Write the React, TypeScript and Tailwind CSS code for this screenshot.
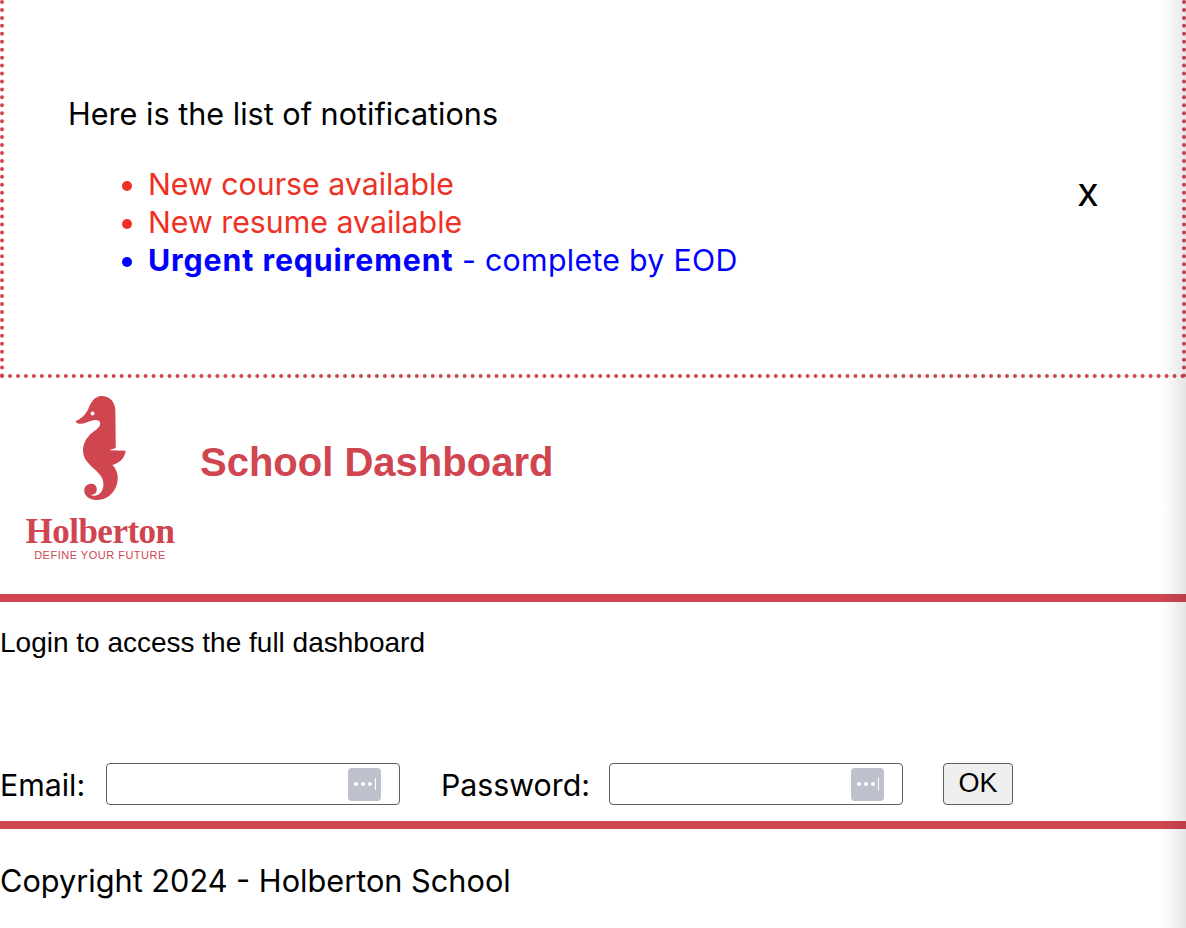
const sfFont = "font-['Inter','Liberation_Sans',sans-serif]";

function Seahorse() {
  return (
    <svg viewBox="220 40 160 330" className="h-[110px] w-[53px] shrink-0">
      <path
        fill="#cf4550"
        d="M298 48 C325 46 344 62 345 92 L346 205 L326 212 L376 213 C374 232 362 248 336 256 C352 272 357 295 347 322 C335 350 310 364 284 362 C262 360 250 346 251 332 C252 318 264 311 276 313 C287 316 292 327 287 338 C283 346 274 348 268 345 C278 352 292 350 300 340 C312 326 312 306 300 288 C286 268 258 254 250 229 C243 205 250 184 268 165 C281 152 300 144 299 130 C298 122 290 119 278 121 C262 124 250 133 237 132 C230 131 226 128 225 124 C240 118 252 108 261 92 C268 76 275 54 298 48 Z"
      />
      <circle cx="276" cy="101" r="6" fill="#ffffff" />
    </svg>
  );
}

function KeyBadge() {
  return (
    <span className="flex h-[33px] w-[33px] items-center justify-center gap-[3px] rounded-[4px] bg-[#bcc1cc]">
      <span className="h-[4px] w-[4px] rounded-full bg-white" />
      <span className="h-[4px] w-[4px] rounded-full bg-white" />
      <span className="h-[4px] w-[4px] rounded-full bg-white" />
      <span className="h-[12px] w-[1px] bg-white" />
    </span>
  );
}

function Field({ label, className }: { label: string; className: string }) {
  return (
    <>
      <label className={`whitespace-nowrap pt-[2px] text-[30.3px] leading-none text-black ${className}`}>{label}</label>
      <div className="ml-[20px] flex h-[42px] w-[294px] items-center justify-end rounded-[4px] border border-[#5f5f5f] bg-white pr-[18px]">
        <KeyBadge />
      </div>
    </>
  );
}

export default function App() {
  return (
    <div className={`relative h-[928px] w-[1186px] overflow-hidden bg-white ${sfFont}`}>
      {/* Notifications */}
      <div className="relative h-[378px] border-x-[4px] border-b-[4px] border-dotted border-[#cf4550] pl-[64px] pt-[95px]">
        <p className="text-[30.6px] leading-[38px] text-black">Here is the list of notifications</p>
        <ul className="mt-[32px] list-disc pl-[80px] text-[30.3px] leading-[38px]">
          <li className="text-[#ee3124]">New course available</li>
          <li className="text-[#ee3124]">New resume available</li>
          <li className="text-[#0000ff]">
            <strong className="font-bold tracking-[0.9px]">Urgent requirement</strong>{' '}
            <span className="tracking-[0.3px]">- complete by EOD</span>
          </li>
        </ul>
        <span className="absolute left-[1073px] top-[168px] text-[40px] leading-[48px] text-black">x</span>
      </div>

      {/* Header */}
      <header className="flex h-[216px] items-start">
        <div className="ml-[20px] flex w-[160px] flex-col items-center pt-[15px]">
          <Seahorse />
          <span className="mt-[14px] font-['Liberation_Serif',serif] text-[35px] font-bold leading-[30px] tracking-[-0.5px] text-[#cf4550]">
            Holberton
          </span>
          <span className="mt-[1px] font-['Liberation_Sans',sans-serif] text-[11px] leading-[14px] tracking-[0.5px] text-[#cf4550]">
            DEFINE YOUR FUTURE
          </span>
        </div>
        <h1 className="ml-[20px] mt-[64px] font-['Liberation_Sans',sans-serif] text-[40px] font-bold leading-[40px] text-[#cf4550]">
          School Dashboard
        </h1>
      </header>

      {/* Body */}
      <main className="h-[235px] border-y-[8px] border-[#cf4550]">
        <p className="pt-[24px] font-['Liberation_Sans',sans-serif] text-[28px] leading-[34px] text-black">
          Login to access the full dashboard
        </p>
        <form className="mt-[103px] flex items-center">
          <Field label="Email:" className="w-[86px]" />
          <Field label="Password:" className="ml-[41px] w-[148px]" />
          <button
            type="button"
            className="ml-[40px] h-[42px] w-[70px] rounded-[4px] border border-[#5f5f5f] bg-[#efefef] pb-[2px] font-['Liberation_Sans',sans-serif] text-[27px] leading-none text-black"
          >
            OK
          </button>
        </form>
      </main>

      {/* Footer */}
      <footer className="pt-[33px]">
        <p className="text-[30.7px] leading-[38px] text-black">Copyright 2024 - Holberton School</p>
      </footer>

      {/* Shade along the right edge */}
      <div className="pointer-events-none absolute inset-y-0 right-0 w-[24px] bg-gradient-to-r from-transparent to-black/10" />
    </div>
  );
}
